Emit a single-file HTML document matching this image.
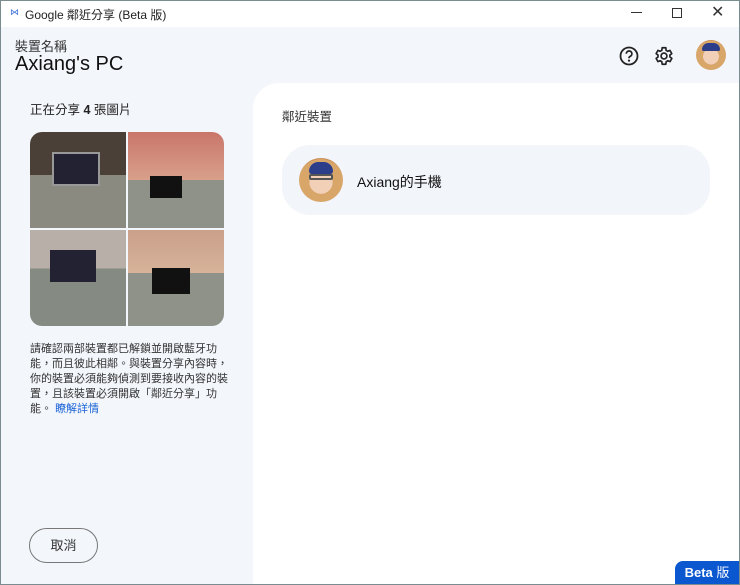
<!DOCTYPE html>
<html><head><meta charset="utf-8"><style>
*{margin:0;padding:0;box-sizing:border-box}
body{width:740px;height:585px;overflow:hidden;font-family:"Liberation Sans","Noto Sans CJK TC",sans-serif;background:#f3f6fb;position:relative;color:#1f1f1f}
.win{position:absolute;left:0;top:0;width:740px;height:585px;border:1px solid #7a8c90}
.tb{position:absolute;left:1px;top:1px;width:738px;height:26px;background:#fff;font-size:12px}
.abs{position:absolute}
.right{position:absolute;left:253px;top:83px;width:486px;height:501px;background:#fff;border-top-left-radius:26px}
.card{position:absolute;left:282px;top:145px;width:428px;height:70px;background:#f2f5fa;border-radius:28px}
.av{border-radius:50%;background:radial-gradient(circle at 50% 55%,#f2d0b8 0 35%,#d9a66a 36% 70%,#c98f55 71%);overflow:hidden}
.grid{position:absolute;left:30px;top:132px;width:194px;height:194px;border-radius:12px;overflow:hidden}
.grid div{position:absolute;width:96px;height:96px}
</style></head><body>
<div class="win"></div>
<div class="tb">
<span class="abs" style="left:9px;top:6px;color:#3b6fd8;font-size:9px">⋈</span>
<span class="abs" style="left:24px;top:5px;color:#222">Google 鄰近分享 (Beta 版)</span>
<span class="abs" style="left:630px;top:11px;width:11px;height:1px;background:#333"></span>
<span class="abs" style="left:671px;top:7px;width:10px;height:10px;border:1px solid #333"></span>
<span class="abs" style="left:710px;top:1px;font-size:16px;color:#333">✕</span>
</div>
<div class="abs" style="left:15px;top:36px;font-size:13px;color:#333">裝置名稱</div>
<div class="abs" style="left:15px;top:53px;font-size:20px;color:#111">Axiang's PC</div>
<svg class="abs" style="left:618px;top:45px" width="22" height="22" viewBox="0 0 22 22"><circle cx="11" cy="11" r="8.5" fill="none" stroke="#222" stroke-width="1.8"/><path d="M8.3 8.8a2.8 2.8 0 1 1 3.8 2.6c-.8.4-1.1.9-1.1 1.8" fill="none" stroke="#222" stroke-width="1.7"/><circle cx="11" cy="15.6" r="1.1" fill="#222"/></svg>
<svg class="abs" style="left:653px;top:45px" width="22" height="22" viewBox="0 0 24 24"><path d="M19.4 13a7.5 7.5 0 0 0 0-2l2.1-1.6-2-3.5-2.5 1a7.5 7.5 0 0 0-1.7-1L15 3h-4l-.4 2.9a7.5 7.5 0 0 0-1.7 1l-2.5-1-2 3.5L6.5 11a7.5 7.5 0 0 0 0 2l-2.1 1.6 2 3.5 2.5-1a7.5 7.5 0 0 0 1.7 1L11 21h4l.4-2.9a7.5 7.5 0 0 0 1.7-1l2.5 1 2-3.5z" transform="translate(-1 0)" fill="none" stroke="#222" stroke-width="1.8" stroke-linejoin="round"/><circle cx="12" cy="12" r="3.2" fill="none" stroke="#222" stroke-width="1.8"/></svg>
<div class="abs av" style="left:696px;top:40px;width:30px;height:30px"><div class="abs" style="left:6px;top:3px;width:18px;height:8px;background:#2c3e8a;border-radius:8px 8px 2px 2px"></div></div>
<div class="abs" style="left:30px;top:99px;font-size:12.5px;color:#222">正在分享 <b>4</b> 張圖片</div>
<div class="grid">
<div style="left:0;top:0;background:linear-gradient(#4a4038 0 45%,#8a8a80 45% 100%)"><span class="abs" style="left:22px;top:20px;width:48px;height:34px;background:#223;border:2px solid #999"></span></div>
<div style="left:98px;top:0;background:linear-gradient(#c9766a,#d8a08a 50%,#8e9288 50%)"><span class="abs" style="left:22px;top:44px;width:32px;height:22px;background:#111"></span></div>
<div style="left:0;top:98px;background:linear-gradient(#b8b0a8 0 40%,#858a82 40%)"><span class="abs" style="left:20px;top:20px;width:46px;height:32px;background:#223"></span></div>
<div style="left:98px;top:98px;background:linear-gradient(#caa08a,#d7b39a 45%,#8e9288 45%)"><span class="abs" style="left:24px;top:38px;width:38px;height:26px;background:#111"></span></div>
</div>
<div class="abs" style="left:30px;top:342px;width:200px;font-size:11px;line-height:15px;color:#333">請確認兩部裝置都已解鎖並開啟藍牙功能，而且彼此相鄰。與裝置分享內容時，你的裝置必須能夠偵測到要接收內容的裝置，且該裝置必須開啟「鄰近分享」功能。 <span style="color:#1a63d6">瞭解詳情</span></div>
<div class="abs" style="left:29px;top:528px;width:69px;height:35px;border:1px solid #777;border-radius:18px;font-size:13px;text-align:center;line-height:33px;color:#333">取消</div>
<div class="right"></div>
<div class="abs" style="left:282px;top:106px;font-size:12.5px;color:#333">鄰近裝置</div>
<div class="card"></div>
<div class="abs av" style="left:299px;top:158px;width:44px;height:44px"><div class="abs" style="left:10px;top:4px;width:24px;height:12px;background:#2c3e8a;border-radius:10px 10px 3px 3px"></div><div class="abs" style="left:10px;top:16px;width:24px;height:6px;border:2px solid #555;border-radius:2px"></div></div>
<div class="abs" style="left:357px;top:172px;font-size:14px;color:#111">Axiang的手機</div>
<div class="abs" style="left:675px;top:561px;width:64px;height:23px;background:#0b57d0;border-top-left-radius:8px;color:#fff;font-size:13px;font-weight:bold;text-align:center;line-height:23px">Beta <span style="font-weight:normal">版</span></div>
</body></html>
